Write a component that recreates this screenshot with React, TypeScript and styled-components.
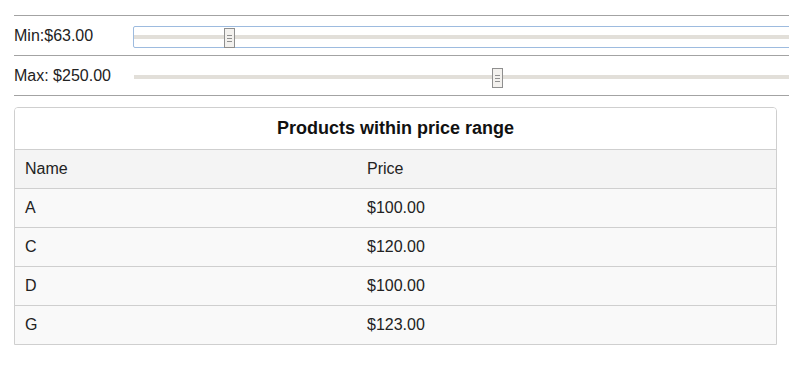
import React from "react";
import styled, { createGlobalStyle } from "styled-components";

const Global = createGlobalStyle`
  html, body { margin: 0; padding: 0; background: #fff; overflow: hidden; }
  body { font-family: "Liberation Sans", Arial, sans-serif; font-size: 16px; color: #222; }
`;

const Page = styled.div`
  padding: 15px 12px 0 14px;
`;

const Controls = styled.div`
  margin-right: -12px;
  border-bottom: 1px solid #a3a3a3;
  margin-bottom: 11px;
  overflow: hidden;
`;

const Row = styled.div`
  display: flex;
  height: 39px;
  border-top: 1px solid #a3a3a3;
`;

const Label = styled.div`
  width: 119px;
  flex: none;
  align-self: center;
  line-height: 18px;
`;

const SliderFrame = styled.div<{ $focused?: boolean }>`
  position: relative;
  flex: none;
  width: 740px;
  height: 20px;
  margin-top: 10px;
  border: 1px solid ${(p) => (p.$focused ? "#9dbbdf" : "transparent")};
  border-radius: 2px;
`;

const Track = styled.div`
  position: absolute;
  left: 0;
  right: 0;
  top: 8px;
  height: 4px;
  background: #e2dfd9;
`;

const Thumb = styled.div`
  position: absolute;
  top: 1px;
  width: 9px;
  height: 18px;
  border: 1px solid #8f8f8f;
  background: #f3f1ee;
  display: flex;
  flex-direction: column;
  align-items: center;
  justify-content: center;
  gap: 2px;
  box-sizing: content-box;
`;

const Grip = styled.span`
  display: block;
  width: 5px;
  height: 1px;
  background: #909090;
`;

const Card = styled.div`
  border: 1px solid #cfcfcf;
  border-radius: 4px 4px 0 0;
  overflow: hidden;
`;

const Title = styled.div`
  height: 41px;
  display: flex;
  align-items: center;
  justify-content: center;
  font-weight: bold;
  font-size: 18px;
  color: #111;
  background: #fff;
`;

const TableRow = styled.div<{ $head?: boolean }>`
  display: grid;
  grid-template-columns: 342px 1fr;
  height: 38px;
  align-items: center;
  border-top: 1px solid #cfcfcf;
  background: ${(p) => (p.$head ? "#f4f4f4" : "#f9f9f9")};
`;

const Cell = styled.div`
  padding-left: 10px;
  line-height: 18px;
`;

const PX_PER_DOLLAR = 1.433;

function Slider({ value, focused }: { value: number; focused?: boolean }) {
  return (
    <SliderFrame $focused={focused}>
      <Track />
      <Thumb style={{ left: Math.round(value * PX_PER_DOLLAR) }}>
        <Grip />
        <Grip />
        <Grip />
      </Thumb>
    </SliderFrame>
  );
}

const products = [
  { name: "A", price: 100 },
  { name: "C", price: 120 },
  { name: "D", price: 100 },
  { name: "G", price: 123 },
];

export default function App() {
  const min = 63;
  const max = 250;
  return (
    <>
      <Global />
      <Page>
        <Controls>
          <Row>
            <Label>Min:${min.toFixed(2)}</Label>
            <Slider value={min} focused />
          </Row>
          <Row>
            <Label>Max: ${max.toFixed(2)}</Label>
            <Slider value={max} />
          </Row>
        </Controls>
        <Card>
          <Title>Products within price range</Title>
          <TableRow $head>
            <Cell>Name</Cell>
            <Cell>Price</Cell>
          </TableRow>
          {products.map((p) => (
            <TableRow key={p.name}>
              <Cell>{p.name}</Cell>
              <Cell>${p.price.toFixed(2)}</Cell>
            </TableRow>
          ))}
        </Card>
      </Page>
    </>
  );
}
